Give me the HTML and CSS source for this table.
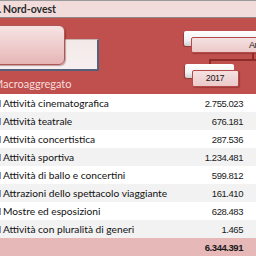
FILE: index.html
```html
<!DOCTYPE html>
<html lang="it">
<head>
<meta charset="utf-8">
<title>Nord-ovest</title>
<link rel="stylesheet" href="styles.css">
</head>
<body>
<div class="sheet">
  <div class="topbar"><span class="crumb">.</span> Nord-ovest</div>
  <div class="pane">
    <div class="slicer-back"></div>
    <div class="slicer-front"></div>
    <div class="btn-white btn-w1"></div>
    <div class="btn-pink btn-p1"><span class="btn-text-cut">Anno</span></div>
    <div class="line line-h"></div>
    <div class="line line-v1"></div>
    <div class="line line-v2"></div>
    <div class="btn-white btn-w2"></div>
    <div class="btn-pink btn-p2">2017</div>
    <div class="pane-label">Macroaggregato</div>
  </div>
  <div class="table">
    <div class="row"><span class="mark"></span><span class="label">Attività cinematografica</span><span class="val">2.755.023</span></div>
    <div class="row alt"><span class="mark"></span><span class="label">Attività teatrale</span><span class="val">676.181</span></div>
    <div class="row"><span class="mark"></span><span class="label">Attività concertistica</span><span class="val">287.536</span></div>
    <div class="row alt"><span class="mark"></span><span class="label">Attività sportiva</span><span class="val">1.234.481</span></div>
    <div class="row"><span class="mark"></span><span class="label">Attività di ballo e concertini</span><span class="val">599.812</span></div>
    <div class="row alt"><span class="mark"></span><span class="label">Attrazioni dello spettacolo viaggiante</span><span class="val">161.410</span></div>
    <div class="row"><span class="mark"></span><span class="label">Mostre ed esposizioni</span><span class="val">628.483</span></div>
    <div class="row alt"><span class="mark"></span><span class="label">Attività con pluralità di generi</span><span class="val">1.465</span></div>
    <div class="row total"><span class="label"></span><span class="val">6.344.391</span></div>
  </div>
</div>
</body>
</html>
```

FILE: styles.css
```css
html, body {
  margin: 0;
  padding: 0;
  width: 256px;
  height: 256px;
  overflow: hidden;
  background: #ffffff;
}

.sheet {
  width: 256px;
  height: 256px;
  overflow: hidden;
  display: flex;
  flex-direction: column;
}

.topbar {
  height: 16px;
  border-top: 1px solid #9a9a9a;
  border-bottom: 1px solid #8a8a8a;
  background: #f2dcdb;
  font-family: "Lato", "DejaVu Sans", sans-serif;
  font-weight: 700;
  font-size: 10.5px;
  line-height: 16px;
  color: #2a2a2a;
  white-space: nowrap;
  flex: none;
}

.crumb {
  color: #555;
  margin-left: -1px;
  margin-right: -1px;
}

.pane {
  position: relative;
  height: 76px;
  background: #c0504d;
  flex: none;
  display: flex;
  flex-direction: column;
  justify-content: flex-end;
}

.pane-label {
  font-family: "Lato", "DejaVu Sans", sans-serif;
  font-size: 11px;
  color: #f4dcdb;
  padding: 0 0 3px 0;
  margin-left: -7px;
  line-height: 14px;
  white-space: nowrap;
}

.slicer-back {
  position: absolute;
  left: -10px;
  top: 21px;
  width: 107px;
  height: 29px;
  background: linear-gradient(#f3e9e9, #f7efef);
  border-top: 1px solid #c9b4b4;
  border-right: 2px solid #55607a;
  border-bottom: 2px solid #55607a;
}

.slicer-front {
  position: absolute;
  left: -10px;
  top: 7px;
  width: 73px;
  height: 38px;
  border-radius: 6px;
  background: linear-gradient(#f6e4e4, #ecc4c4 70%, #e6b5b5);
  border: 1px solid #b05454;
  box-shadow: 1px 1px 1px rgba(80, 20, 20, 0.35);
}

.btn-white {
  position: absolute;
  background: linear-gradient(#ffffff, #f2f2f2 60%, #cfcfcf);
  border-radius: 2px;
  box-shadow: -1px 1px 1px rgba(0, 0, 0, 0.25);
}

.btn-w1 {
  left: 184px;
  top: 13px;
  width: 80px;
  height: 15px;
}

.btn-w2 {
  left: 185px;
  top: 46px;
  width: 49px;
  height: 14px;
}

.btn-pink {
  position: absolute;
  background: linear-gradient(#f5e1e1, #ecc9c9);
  border: 1px solid #b64a4a;
  border-radius: 2px;
  box-shadow: 1px 1px 1px rgba(90, 20, 20, 0.35);
  font-family: "Liberation Sans", Arial, sans-serif;
  font-size: 9px;
  letter-spacing: -0.4px;
  color: #1a1a1a;
  box-sizing: border-box;
  white-space: nowrap;
  overflow: hidden;
}

.btn-p1 {
  left: 191px;
  top: 19px;
  width: 70px;
  height: 16px;
  line-height: 14px;
  padding-left: 57px;
}

.btn-p2 {
  left: 192px;
  top: 52px;
  width: 47px;
  height: 17px;
  line-height: 15px;
  text-align: center;
  padding-right: 1px;
}

.line {
  position: absolute;
  background: #8e2b29;
}

.line-h {
  left: 209px;
  top: 41px;
  width: 50px;
  height: 2px;
}

.line-v1 {
  left: 209px;
  top: 41px;
  width: 2px;
  height: 5px;
}

.line-v2 {
  left: 252px;
  top: 35px;
  width: 2px;
  height: 7px;
}

.table {
  display: flex;
  flex-direction: column;
  flex: none;
}

.row {
  height: 18px;
  display: flex;
  align-items: center;
  background: #ffffff;
  flex: none;
}

.row.alt {
  background: #f2f2f2;
}

.row.total {
  background: #e6b8b7;
}

.mark {
  width: 1px;
  height: 7px;
  background: #7b9ac6;
  margin-right: 2px;
  flex: none;
}

.label {
  flex: 1;
  font-family: "Lato", "DejaVu Sans", sans-serif;
  font-size: 10.2px;
  color: #111111;
  white-space: nowrap;
}

.val {
  font-family: "Liberation Sans", Arial, sans-serif;
  font-size: 9.5px;
  letter-spacing: -0.45px;
  color: #1a1a1a;
  padding-right: 13px;
  white-space: nowrap;
}

.total .val {
  font-weight: 700;
}
```
